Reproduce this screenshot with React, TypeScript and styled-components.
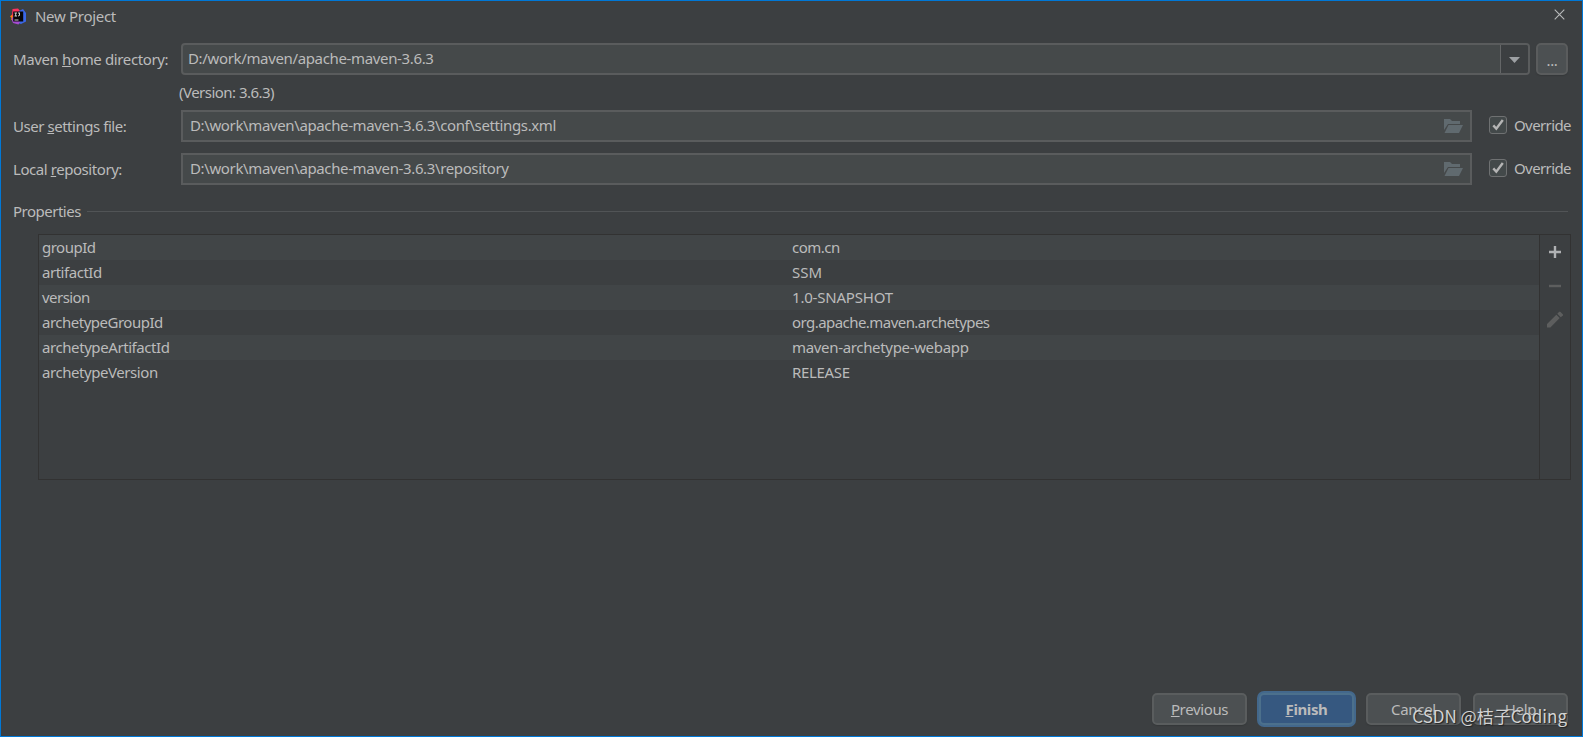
import React from "react";
import styled, { createGlobalStyle, css } from "styled-components";

const GlobalStyle = createGlobalStyle`
  *, *::before, *::after { box-sizing: border-box; }
  body { margin: 0; background: #3c3f41; overflow: hidden; }
`;

const Dialog = styled.main`
  position: relative;
  display: flex;
  flex-direction: column;
  width: 1583px;
  height: 737px;
  border: 1px solid #0078d7;
  background: #3c3f41;
  color: #bbbbbb;
  font-family: "Noto Sans", "Noto Sans CJK SC", sans-serif;
  font-size: 15px;
  line-height: 20px;
`;

const Text = styled.span<{ $track?: number }>`
  display: inline-block;
  white-space: pre;
  letter-spacing: ${(p) => p.$track ?? -0.3}px;
`;

const Mnemonic = styled.span`
  text-decoration: underline;
  text-decoration-thickness: 1px;
  text-decoration-skip-ink: none;
  text-underline-offset: 1px;
`;

const TitleBar = styled.header`
  display: flex;
  align-items: center;
  height: 31px;
  padding: 0 17px 0 9px;
`;

const Title = styled.h1`
  flex: 1;
  margin: -2px 0 0 8px;
  font-size: inherit;
  font-weight: 400;
`;

const CloseButton = styled.button`
  display: flex;
  padding: 0;
  border: 0;
  margin-top: -4px;
  background: none;
`;

const Form = styled.section`
  display: flex;
  flex-direction: column;
  padding: 11px 12px 0;
`;

const FormRow = styled.div<{ $gap?: number }>`
  display: flex;
  align-items: center;
  height: 32px;
  margin-bottom: ${(p) => p.$gap ?? 0}px;
`;

const Label = styled.label`
  width: 168px;
  flex: none;
  margin-top: -1px;
`;

const boxed = css`
  display: flex;
  align-items: center;
  height: 32px;
  border: 2px solid #5a5c5d;
  background: #45494a;
`;

const ComboBox = styled.div`
  ${boxed}
  flex: 1;
  border-radius: 4px;
  padding-left: 5px;
  overflow: hidden;
`;

const FieldText = styled.div`
  flex: 1;
  margin-top: -2px;
`;

const ComboArrow = styled.span`
  display: flex;
  align-items: center;
  justify-content: center;
  width: 28px;
  height: 28px;
  padding-top: 2px;
  border-left: 1px solid #646667;
  background: #3c3f41;
`;

const BrowseButton = styled.button`
  ${boxed}
  justify-content: center;
  width: 32px;
  margin: 0 2px 0 6px;
  padding: 2px 0 0;
  border-radius: 5px;
  background: #4c5052;
  color: #bbbbbb;
  font: inherit;
  box-shadow: 0 1px 1px #35383a;
`;

const PathField = styled.div`
  ${boxed}
  flex: none;
  width: 1291px;
  padding: 0 7px;
`;

const VersionNote = styled.div`
  height: 35px;
  padding: 7px 0 0 166px;
`;

const Override = styled.label`
  display: flex;
  align-items: center;
  gap: 7px;
  margin: -2px 0 0 17px;
`;

const CheckMark = styled.span`
  display: flex;
  align-items: center;
  justify-content: center;
  width: 18px;
  height: 18px;
  border: 1px solid #6f7172;
  border-radius: 3px;
  background: #43494a;
`;

const SectionHeading = styled.h2`
  display: flex;
  align-items: center;
  gap: 6px;
  height: 20px;
  margin: 16px 14px 0 12px;
  font-size: inherit;
  font-weight: 400;
  &::after {
    content: "";
    flex: 1;
    height: 1px;
    background: #515456;
  }
`;

const TablePanel = styled.section`
  display: flex;
  height: 246px;
  margin: 13px 11px 0 37px;
  border: 1px solid #323232;
`;

const Table = styled.div`
  flex: 1;
  display: flex;
  flex-direction: column;
`;

const TableRow = styled.div<{ $striped: boolean }>`
  display: grid;
  grid-template-columns: 750px 1fr;
  align-items: center;
  height: 25px;
  padding: 0 0 2px 3px;
  background: ${(p) => (p.$striped ? "#414547" : "transparent")};
`;

const TableTools = styled.aside`
  display: flex;
  flex-direction: column;
  align-items: center;
  width: 31px;
  gap: 16px;
  padding-top: 8px;
  border-left: 1px solid #323232;
`;

const Tool = styled.button`
  display: flex;
  padding: 0;
  border: 0;
  background: none;
`;

const Footer = styled.footer`
  display: flex;
  align-items: center;
  justify-content: flex-end;
  gap: 12px;
  height: 36px;
  margin: auto 14px 9px;
`;

const Button = styled.button<{ $primary?: boolean }>`
  display: flex;
  align-items: center;
  justify-content: center;
  width: 95px;
  height: 32px;
  padding: 0;
  border: 2px solid #5a5d5e;
  border-radius: 5px;
  background: #4c5052;
  color: #bbbbbb;
  font: inherit;
  box-shadow: 0 1px 1px #35383a;
  ${(p) =>
    p.$primary &&
    css`
      border-color: #4c708c;
      background: #365880;
      font-weight: 700;
      box-shadow: 0 0 0 2px #43688c;
    `}
`;

const Watermark = styled.div`
  position: absolute;
  right: 15px;
  bottom: 7px;
  color: #d2d3d3;
  font-family: "Noto Sans CJK SC", sans-serif;
  font-size: 17px;
  line-height: 26px;
  text-shadow: 1px 1px 1px #222;
  white-space: nowrap;
`;

const AppLogo = () => (
  <svg width="17" height="17" viewBox="0 0 17 17">
    <path d="M0 8.500 2.500 6 6 11l-3 2-2-1.500.500-1.500z" fill="#f97a12" />
    <path d="M2.500 1 8 .5l2.500 3L6 9 2 7.500z" fill="#fe315d" />
    <path d="m9 3 4-2 3 4v8.500L11 16l-6-2z" fill="#3a67e8" />
    <path d="m2 10 4-5 4 9-1.500 2.500L3 15l-1-2.500z" fill="#a54bd0" />
    <path d="M3.200 3.500h10v10h-10z" fill="#080609" />
    <path d="M4.500 5h2.500M5.700 5v3M4.500 8h2.500M8 5h2M9.500 5v2.500L8 8M4.500 12h4" fill="none" stroke="#d0d0d0" />
  </svg>
);

const CloseIcon = () => (
  <svg width="11" height="11" viewBox="0 0 11 11">
    <path d="m.7.7 9.6 9.6m0-9.6L.7 10.3" stroke="#b8babb" strokeWidth="1.1" />
  </svg>
);

const FolderIcon = () => (
  <svg width="19" height="14" viewBox="0 0 19 14">
    <path d="M0 0h6l2 2h8v3H4L0 11z" fill="#606a6f" />
    <path d="M4.500 6H19l-4 8H.5z" fill="#606a6f" />
  </svg>
);

const CheckIcon = () => (
  <svg width="12" height="12" viewBox="0 0 12 12">
    <path d="m1.300 6.400 3 3.300L10.800 1" fill="none" stroke="#b5b5b5" strokeWidth="2.4" />
  </svg>
);

const PROPERTIES = [
  { name: "groupId", nameTrack: -0.5, value: "com.cn", valueTrack: -0.5 },
  { name: "artifactId", nameTrack: -0.47, value: "SSM", valueTrack: 0 },
  { name: "version", nameTrack: -0.55, value: "1.0-SNAPSHOT", valueTrack: -0.2 },
  { name: "archetypeGroupId", nameTrack: -0.5, value: "org.apache.maven.archetypes", valueTrack: -0.55 },
  { name: "archetypeArtifactId", nameTrack: -0.42, value: "maven-archetype-webapp", valueTrack: -0.33 },
  { name: "archetypeVersion", nameTrack: -0.44, value: "RELEASE", valueTrack: -0.33 },
];

const OverrideBox = () => (
  <Override>
    <CheckMark><CheckIcon /></CheckMark>
    <Text $track={-0.6}>Override</Text>
  </Override>
);

export default function App() {
  return (
    <>
      <GlobalStyle />
      <Dialog>
        <TitleBar>
          <AppLogo />
          <Title><Text>New Project</Text></Title>
          <CloseButton aria-label="Close"><CloseIcon /></CloseButton>
        </TitleBar>
        <Form>
          <FormRow>
            <Label><Text $track={-0.37}>Maven <Mnemonic>h</Mnemonic>ome directory:</Text></Label>
            <ComboBox>
              <FieldText><Text $track={-0.35}>D:/work/maven/apache-maven-3.6.3</Text></FieldText>
              <ComboArrow>
                <svg width="11" height="6" viewBox="0 0 11 6"><path d="M0 0h11L5.500 6z" fill="#9da0a3" /></svg>
              </ComboArrow>
            </ComboBox>
            <BrowseButton><Text>...</Text></BrowseButton>
          </FormRow>
          <VersionNote><Text $track={-0.53}>(Version: 3.6.3)</Text></VersionNote>
          <FormRow $gap={11}>
            <Label><Text $track={-0.46}>User <Mnemonic>s</Mnemonic>ettings file:</Text></Label>
            <PathField>
              <FieldText><Text $track={-0.37}>D:\work\maven\apache-maven-3.6.3\conf\settings.xml</Text></FieldText>
              <FolderIcon />
            </PathField>
            <OverrideBox />
          </FormRow>
          <FormRow>
            <Label><Text $track={-0.44}>Local <Mnemonic>r</Mnemonic>epository:</Text></Label>
            <PathField>
              <FieldText><Text $track={-0.37}>D:\work\maven\apache-maven-3.6.3\repository</Text></FieldText>
              <FolderIcon />
            </PathField>
            <OverrideBox />
          </FormRow>
        </Form>
        <SectionHeading><Text $track={-0.5}>Properties</Text></SectionHeading>
        <TablePanel>
          <Table>
            {PROPERTIES.map((row, i) => (
              <TableRow key={row.name} $striped={i % 2 === 0}>
                <Text $track={row.nameTrack}>{row.name}</Text>
                <Text $track={row.valueTrack}>{row.value}</Text>
              </TableRow>
            ))}
          </Table>
          <TableTools>
            <Tool aria-label="Add">
              <svg width="18" height="18"><path d="M3 9h12M9 3v12" stroke="#afb1b3" strokeWidth="2.4" /></svg>
            </Tool>
            <Tool aria-label="Remove">
              <svg width="18" height="18"><path d="M3 9h12" stroke="#5d5e5e" strokeWidth="2.4" /></svg>
            </Tool>
            <Tool aria-label="Edit">
              <svg width="18" height="18"><path d="M1 13 10.300 3.700l3.400 3.400L4.400 16.500H1zM11.300 2.700l1.900-2h1.100L17 3.400v1L14.700 6.200z" fill="#5d5e5e" /></svg>
            </Tool>
          </TableTools>
        </TablePanel>
        <Footer>
          <Button><Text $track={-0.37}><Mnemonic>P</Mnemonic>revious</Text></Button>
          <Button $primary><Text $track={-0.4}><Mnemonic>F</Mnemonic>inish</Text></Button>
          <Button><Text>Cancel</Text></Button>
          <Button><Text>Help</Text></Button>
        </Footer>
        <Watermark>CSDN @桔子Coding</Watermark>
      </Dialog>
    </>
  );
}
